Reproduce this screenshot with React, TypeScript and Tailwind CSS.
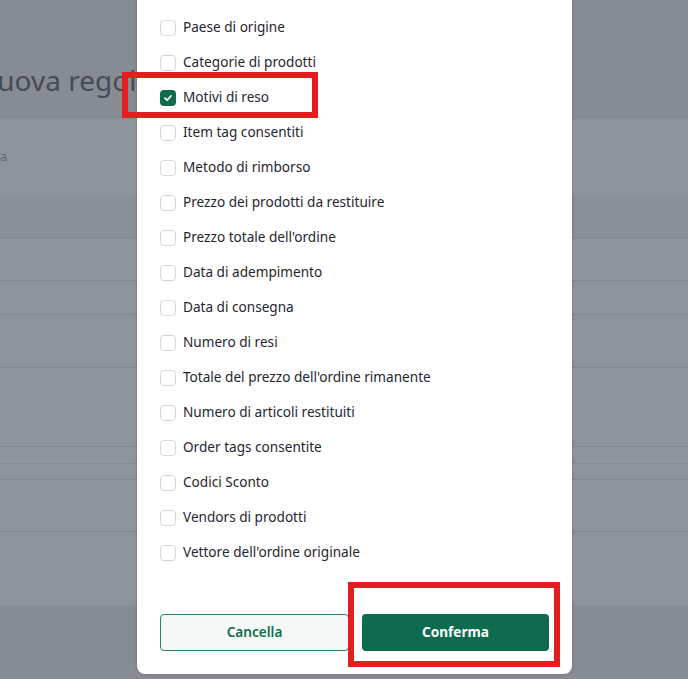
import React from "react";

const items = [
  { label: "Paese di origine", checked: false },
  { label: "Categorie di prodotti", checked: false },
  { label: "Motivi di reso", checked: true },
  { label: "Item tag consentiti", checked: false },
  { label: "Metodo di rimborso", checked: false },
  { label: "Prezzo dei prodotti da restituire", checked: false },
  { label: "Prezzo totale dell'ordine", checked: false },
  { label: "Data di adempimento", checked: false },
  { label: "Data di consegna", checked: false },
  { label: "Numero di resi", checked: false },
  { label: "Totale del prezzo dell'ordine rimanente", checked: false },
  { label: "Numero di articoli restituiti", checked: false },
  { label: "Order tags consentite", checked: false },
  { label: "Codici Sconto", checked: false },
  { label: "Vendors di prodotti", checked: false },
  { label: "Vettore dell'ordine originale", checked: false },
];

function Checkbox({ checked }: { checked: boolean }) {
  if (checked) {
    return (
      <span className="flex h-4 w-4 shrink-0 items-center justify-center rounded-[4px] bg-[#0f6b4c]">
        <svg width="10" height="10" viewBox="0 0 10 10" fill="none">
          <path d="M2 5.2 L4.1 7.2 L8 3" stroke="white" strokeWidth="1.8" strokeLinecap="round" strokeLinejoin="round" />
        </svg>
      </span>
    );
  }
  return <span className="h-4 w-4 shrink-0 rounded-[4px] border border-[#d3d7dd] bg-white" />;
}

export default function App() {
  return (
    <div
      className="relative h-[679px] w-[688px] overflow-hidden bg-[#8f939c]"
      style={{ fontFamily: "'Noto Sans', 'Open Sans', sans-serif" }}
    >
      {/* background page (dimmed) */}
      <div className="flex h-full flex-col">
        <div className="flex h-[119px] shrink-0 items-start overflow-hidden bg-[#878b94] pt-[66px]">
          <span className="-ml-[24px] whitespace-nowrap text-[28px] leading-none text-[#464b55]">Nuova regola</span>
        </div>
        <div className="flex h-[486px] shrink-0 flex-col">
          <div className="h-[78px] shrink-0 pt-[24px] pl-0">
            <span className="text-[13px] text-[#5f6570]">a</span>
          </div>
          <div className="h-[40px] shrink-0 bg-[#8b8f98]" />
          <div className="h-[43px] shrink-0 border-t border-[#82868f]" />
          <div className="h-[34px] shrink-0 border-t border-[#82868f]" />
          <div className="h-[53px] shrink-0 border-t border-[#82868f]" />
          <div className="h-[79px] shrink-0 border-t border-[#82868f]" />
          <div className="h-[17px] shrink-0 border-t border-[#868a93]" />
          <div className="h-[16px] shrink-0 border-t border-[#868a93]" />
          <div className="h-[52px] shrink-0 border-t border-[#82868f]" />
          <div className="flex-1 border-t border-[#82868f]" />
        </div>
        <div className="flex-1 bg-[#878b94]" />
      </div>

      {/* modal */}
      <div className="absolute left-[137px] top-[-20px] flex h-[694px] w-[435px] flex-col rounded-b-[8px] bg-white px-[23px] pb-[23px] shadow-[0_0_3px_rgba(0,0,0,0.25)]">
        <div className="flex flex-col pt-[30px]">
          {items.map((it) => (
            <div key={it.label} className="flex h-[35px] items-center gap-[7px]">
              <Checkbox checked={it.checked} />
              <span className="text-[13.6px] text-[#1f2630]">{it.label}</span>
            </div>
          ))}
        </div>
        <div className="mt-auto flex gap-[13px]">
          <button className="h-[37px] flex-1 rounded-[4px] border border-[#2b8565] bg-[#f4f8f6] text-[13.6px] font-semibold text-[#136c4d]">
            Cancella
          </button>
          <button className="h-[37px] flex-1 rounded-[4px] bg-[#0e6b4e] text-[13.6px] font-bold text-white">
            Conferma
          </button>
        </div>
      </div>

      {/* annotations */}
      <div className="absolute left-[122px] top-[72px] h-[46px] w-[196px] border-[6px] border-[#e41e1e]" />
      <div className="absolute left-[348px] top-[582px] h-[85px] w-[212px] border-[6px] border-[#e41e1e]" />
    </div>
  );
}
